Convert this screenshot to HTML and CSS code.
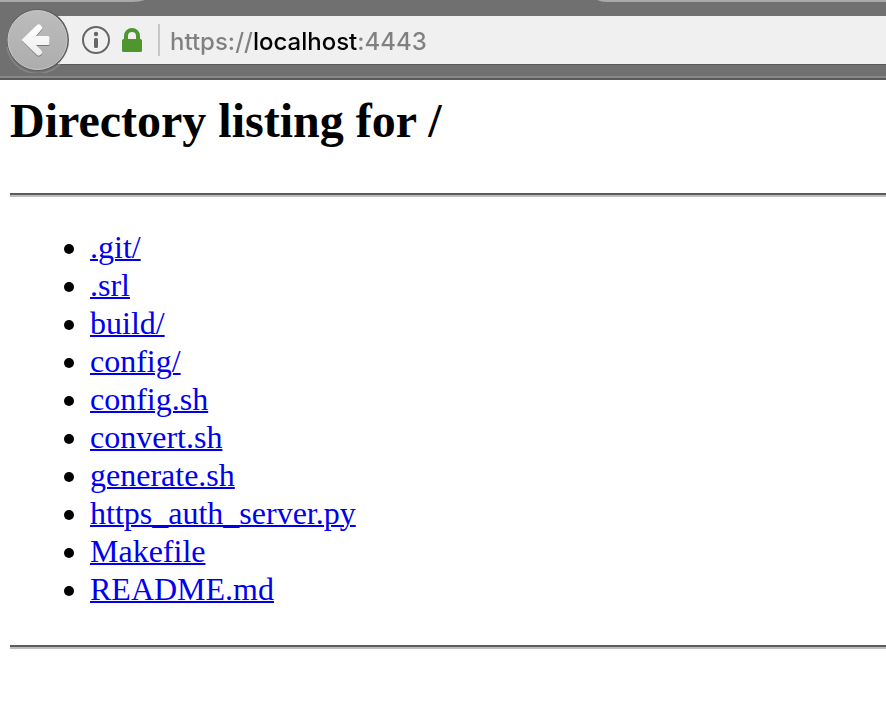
FILE: index.html
```html
<!DOCTYPE html>
<html lang="en">
<head>
<meta charset="utf-8">
<title>Directory listing for /</title>
<link rel="stylesheet" href="styles.css">
</head>
<body>
<header class="chrome">
  <div class="tabs">
    <svg width="145" height="2" viewBox="0 0 145 2" aria-hidden="true"><path d="M0 0H145Q139 2 132 2H0Z" fill="#a9a9a9"/></svg>
    <span class="tab-gap"></span>
    <svg width="10" height="2" viewBox="0 0 10 2" aria-hidden="true"><path d="M0 0H10V2Q4 2 0 0Z" fill="#a9a9a9"/></svg>
    <span class="tab-right"></span>
  </div>
  <div class="toolbar">
    <button class="back" type="button" aria-label="Back">
      <svg width="64" height="64" viewBox="0 0 64 64" aria-hidden="true">
        <defs>
          <linearGradient id="disc" x1="0" y1="0" x2="0" y2="1"><stop offset="0" stop-color="#bcbcbc"/><stop offset="1" stop-color="#adadad"/></linearGradient>
          <linearGradient id="arrow" x1="0" y1="0" x2="0" y2="1"><stop offset="0" stop-color="#fff"/><stop offset="1" stop-color="#ededed"/></linearGradient>
        </defs>
        <path d="M1 38A31 31 0 0 0 54 55" fill="none" stroke="#858585" stroke-width="1.5"/>
        <circle cx="32" cy="31" r="31" fill="#5d5d5d"/>
        <circle cx="31.500" cy="31" r="29.500" fill="url(#disc)" stroke="#cacaca"/>
        <path d="M16 32L31 17Q33 15.500 35 17.500Q37 19.500 35.500 21.500L30 28H42Q43.500 28 43.500 29.500V35.500Q43.500 37 42 37H30L35.500 42.500Q37 44.500 35 46.500Q33 48.500 31 47Z" fill="#777"/>
        <path d="M15.500 31L31 16Q33 14.500 35 16.500Q37 18.500 35.500 20.500L30 27H42Q43.500 27 43.500 28.500V34.500Q43.500 36 42 36H30L35.500 41.500Q37 43.500 35 45.500Q33 47.500 31 46Z" fill="url(#arrow)"/>
      </svg>
    </button>
    <div class="urlbar">
      <svg width="28" height="28" viewBox="0 0 28 28" aria-hidden="true">
        <circle cx="14" cy="14" r="13" fill="none" stroke="#666" stroke-width="2"/>
        <circle cx="14" cy="8" r="2.200" fill="#666"/><rect x="12" y="12" width="4" height="10" rx="1.500" fill="#666"/>
      </svg>
      <svg class="lock" width="20" height="24" viewBox="0 0 20 24" aria-hidden="true">
        <path d="M4 12V8a6 6 0 0 1 12 0V12" fill="none" stroke="#4f9630" stroke-width="4"/>
        <rect y="11" width="20" height="13" rx="1.500" fill="#4f9630"/>
      </svg>
      <span class="divider"></span>
      <input class="address" type="text" value="https://localhost:4443" aria-label="Address" spellcheck="false">
    </div>
  </div>
</header>
<main class="page">
  <h2>Directory listing for /</h2>
  <hr>
  <ul>
    <li><a href="#">.git/</a></li>
    <li><a href="#">.srl</a></li>
    <li><a href="#">build/</a></li>
    <li><a href="#">config/</a></li>
    <li><a href="#">config.sh</a></li>
    <li><a href="#">convert.sh</a></li>
    <li><a href="#">generate.sh</a></li>
    <li><a href="#">https_auth_server.py</a></li>
    <li><a href="#">Makefile</a></li>
    <li><a href="#">README.md</a></li>
  </ul>
  <hr>
</main>
</body>
</html>
```
FILE: styles.css
```css
* {
  box-sizing: border-box;
}

body {
  margin: 0;
  background: #fff;
  color: #000;
  font-family: "Liberation Serif", "Times New Roman", serif;
  font-size: 32px;
  line-height: 38px;
}

.chrome {
  background: #707070;
  border-bottom: 2px solid #5a5a5a;
  overflow: hidden;
}

.tabs {
  display: flex;
  height: 2px;
}

.tabs svg {
  flex: none;
}

.tab-gap {
  flex: none;
  width: 452px;
}

.tab-right {
  flex: 1;
  background: #a9a9a9;
}

.toolbar {
  display: flex;
  align-items: center;
  height: 76px;
  padding: 3px 0 0 6px;
  border-bottom: 2px solid #888;
}

.back {
  flex: none;
  z-index: 1;
  width: 64px;
  height: 64px;
  padding: 0;
  border: 0;
  border-radius: 50%;
  background: none;
}

.back svg {
  display: block;
}

.urlbar {
  flex: 1;
  display: flex;
  align-items: center;
  height: 49px;
  margin-left: -16px;
  padding-left: 28px;
  background: #f0f0f0;
  border-bottom: 1px solid #585858;
}

.urlbar svg {
  flex: none;
}

.lock {
  margin-left: 12px;
}

.divider {
  flex: none;
  width: 2px;
  height: 32px;
  margin: 0 10px 0 16px;
  background: #c8c8c8;
}

.address {
  flex: 1;
  min-width: 0;
  height: 48px;
  padding: 2px 0 0;
  border: 0;
  outline: 0;
  font-family: Inter, sans-serif;
  font-size: 24px;
  font-weight: 500;
  color: transparent;
  caret-color: #000;
  background: linear-gradient(to right, #808080 83px, #000 83px 187px, #808080 187px);
  -webkit-background-clip: text;
  background-clip: text;
}

.page {
  padding: 15px 0 0 10px;
}

h2 {
  margin: 0 0 46px;
  font-size: 48px;
  line-height: 52px;
}

hr {
  height: 4px;
  margin: 0;
  border: 0;
  border-top: 2px solid #5c5c5c;
  border-bottom: 2px solid #bebebe;
}

ul {
  margin: 31px 0 37px;
  padding-left: 80px;
}

a {
  color: #00e;
  text-decoration: underline;
  text-decoration-thickness: 2px;
}
```
